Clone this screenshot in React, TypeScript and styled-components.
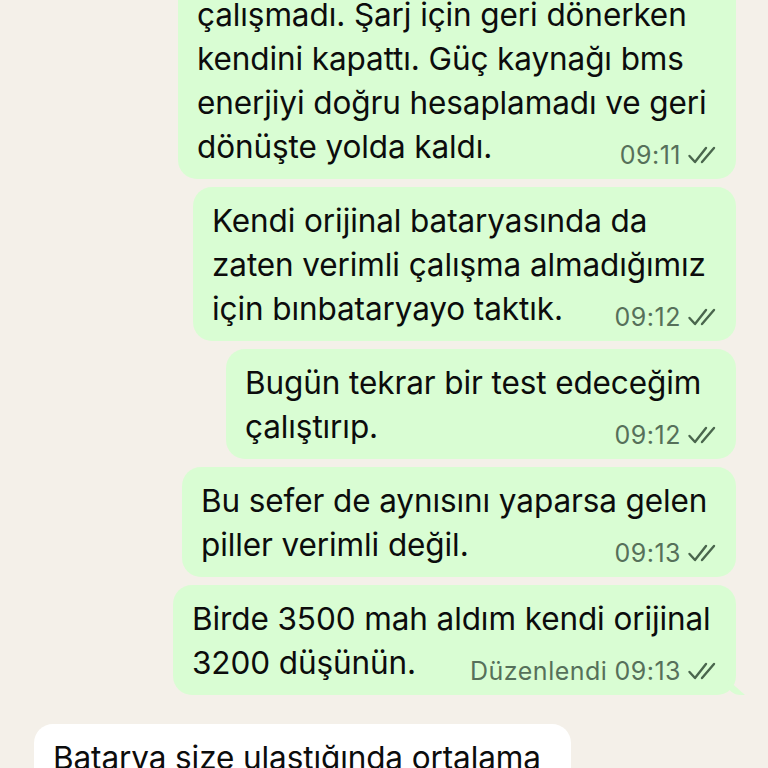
import React from 'react'
import styled, { createGlobalStyle } from 'styled-components'

const GlobalStyle = createGlobalStyle`
  html, body {
    margin: 0;
    padding: 0;
    background: #f4f0e9;
    overflow: hidden;
  }
  body {
    font-family: Inter, "Noto Sans", "Liberation Sans", sans-serif;
    -webkit-font-smoothing: antialiased;
  }
`

interface Message {
  id: number;
  mine: boolean;
  width: number;
  lines: string[];
  time?: string;
  edited?: boolean;
  tail?: boolean;
}

const messages: Message[] = [
  {
    id: 1,
    mine: true,
    width: 558,
    lines: [
      'çalışmadı. Şarj için geri dönerken',
      'kendini kapattı. Güç kaynağı bms',
      'enerjiyi doğru hesaplamadı ve geri',
      'dönüşte yolda kaldı.',
    ],
    time: '09:11',
  },
  {
    id: 2,
    mine: true,
    width: 543,
    lines: ['Kendi orijinal bataryasında da', 'zaten verimli çalışma almadığımız', 'için bınbataryayo taktık.'],
    time: '09:12',
  },
  {
    id: 3,
    mine: true,
    width: 510,
    lines: ['Bugün tekrar bir test edeceğim', 'çalıştırıp.'],
    time: '09:12',
  },
  {
    id: 4,
    mine: true,
    width: 554,
    lines: ['Bu sefer de aynısını yaparsa gelen', 'piller verimli değil.'],
    time: '09:13',
  },
  {
    id: 5,
    mine: true,
    width: 563,
    lines: ['Birde 3500 mah aldım kendi orijinal', '3200 düşünün.'],
    time: '09:13',
    edited: true,
    tail: true,
  },
  {
    id: 6,
    mine: false,
    width: 537,
    lines: ['Batarya size ulaştığında ortalama', 'kaç km gidiyordu?'],
  },
]

// read receipt: two slanted ticks
const DoubleCheck = () => (
  <svg width="30" height="20" viewBox="0 0 30 20" fill="none">
    <path d="M2.5 11 L8 17 L19 3" stroke="currentColor" strokeWidth="2.4" strokeLinecap="round" strokeLinejoin="round" />
    <path d="M15 17 L27 3" stroke="currentColor" strokeWidth="2.4" strokeLinecap="round" />
  </svg>
)

const App: React.FC = () => {
  return (
    <>
      <GlobalStyle />
      <Chat>
        {messages.map((m, i) => {
          const next = messages[i + 1]
          const groupEnd = next && next.mine !== m.mine
          return (
            <Row key={m.id} $mine={m.mine} $groupEnd={!!groupEnd}>
              <Bubble $mine={m.mine} $tail={!!m.tail} style={{ width: m.width }}>
                {m.lines.map((l, j) => (
                  <Line key={j}>{l}</Line>
                ))}
                {m.time && (
                  <Meta>
                    {m.edited && <span>Düzenlendi</span>}
                    <span>{m.time}</span>
                    <DoubleCheck />
                  </Meta>
                )}
              </Bubble>
            </Row>
          )
        })}
      </Chat>
    </>
  )
}

const Chat = styled.div`
  display: flex;
  flex-direction: column;
  margin-top: -19px;
  padding: 0 32px 0 34px;
`

const Row = styled.div<{ $mine: boolean; $groupEnd: boolean }>`
  display: flex;
  justify-content: ${p => (p.$mine ? 'flex-end' : 'flex-start')};
  margin-bottom: ${p => (p.$groupEnd ? '29px' : '8px')};
`

const Bubble = styled.div<{ $mine: boolean; $tail: boolean }>`
  position: relative;
  box-sizing: border-box;
  background: ${p => (p.$mine ? '#d9fdd3' : '#ffffff')};
  border-radius: 19px;
  padding: 12px 20px 10px 19px;
  color: #0c0c0c;
  font-size: 31.5px;
  line-height: 44px;
  letter-spacing: -0.1px;

  ${p =>
    p.$tail &&
    `
    &::after {
      content: '';
      position: absolute;
      right: -9px;
      bottom: 0;
      width: 18px;
      height: 16px;
      background: #d9fdd3;
      border-bottom-left-radius: 14px 12px;
      clip-path: polygon(0 0, 100% 100%, 0 100%);
    }
  `}
`

const Line = styled.div`
  white-space: nowrap;
`

const Meta = styled.div`
  position: absolute;
  right: 19px;
  bottom: 11px;
  display: flex;
  align-items: center;
  gap: 7px;
  font-size: 25px;
  line-height: 26px;
  color: #56705a;
  letter-spacing: 0.5px;

  svg {
    color: #4a664d;
    margin-left: -1px;
  }
`

export default App
